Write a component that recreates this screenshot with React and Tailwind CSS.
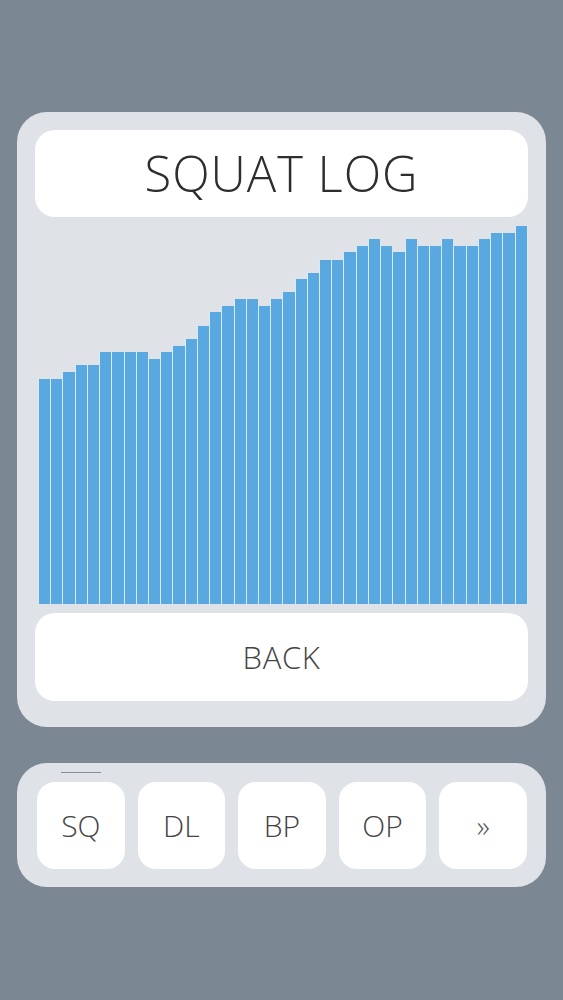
import React from "react";

const heights = [
  225, 225, 232, 239, 239, 252, 252, 252, 252, 245,
  252, 258, 265, 278, 292, 298, 305, 305, 298, 305,
  312, 325, 331, 344, 344, 352, 358, 365, 358, 352,
  365, 358, 358, 365, 358, 358, 365, 371, 371, 378,
];

const tabs = ["SQ", "DL", "BP", "OP"];

const font = { fontFamily: '"Open Sans", "Noto Sans", sans-serif' };

const App = () => {
  return (
    <div className="min-h-[1000px] w-full bg-[#7b8894] px-[17px] pt-[112px]" style={font}>
      {/* Log card */}
      <div className="rounded-[30px] bg-[#dfe2e6] px-[18px] pt-[18px] pb-[26px]">
        <div className="flex h-[87px] items-center justify-center rounded-[20px] bg-white">
          <span className="text-[49px] font-light tracking-[0.02em] text-[#2e2e2e]">SQUAT LOG</span>
        </div>

        <div className="flex h-[387px] items-end pl-[3px]">
          {heights.map((h, i) => (
            <div
              key={i}
              className="flex-1 border-l-[1.5px] border-[#d4ebfa] bg-[#5aa8e0] last:border-r-[1.5px]"
              style={{ height: h }}
            />
          ))}
        </div>

        <button className="mt-[9px] flex h-[88px] w-full items-center justify-center rounded-[20px] bg-white">
          <span className="text-[31px] font-light tracking-[0.02em] text-[#444]">BACK</span>
        </button>
      </div>

      {/* Lift tabs */}
      <div className="mt-[36px] rounded-[30px] bg-[#dfe2e6] pt-[9px] pb-[18px] pl-[20px] pr-[19px]">
        <div className="ml-[24px] h-px w-[40px] bg-[#8a8f94]" />
        <div className="mt-[9px] grid grid-cols-5 gap-[13px]">
          {tabs.map((t) => (
            <button
              key={t}
              className="flex h-[87px] items-center justify-center rounded-[18px] bg-white text-[30px] font-light text-[#444]"
            >
              {t}
            </button>
          ))}
          <button className="flex h-[87px] items-center justify-center rounded-[18px] bg-white text-[30px] font-light text-[#555]">
            »
          </button>
        </div>
      </div>
    </div>
  );
};

export default App;
